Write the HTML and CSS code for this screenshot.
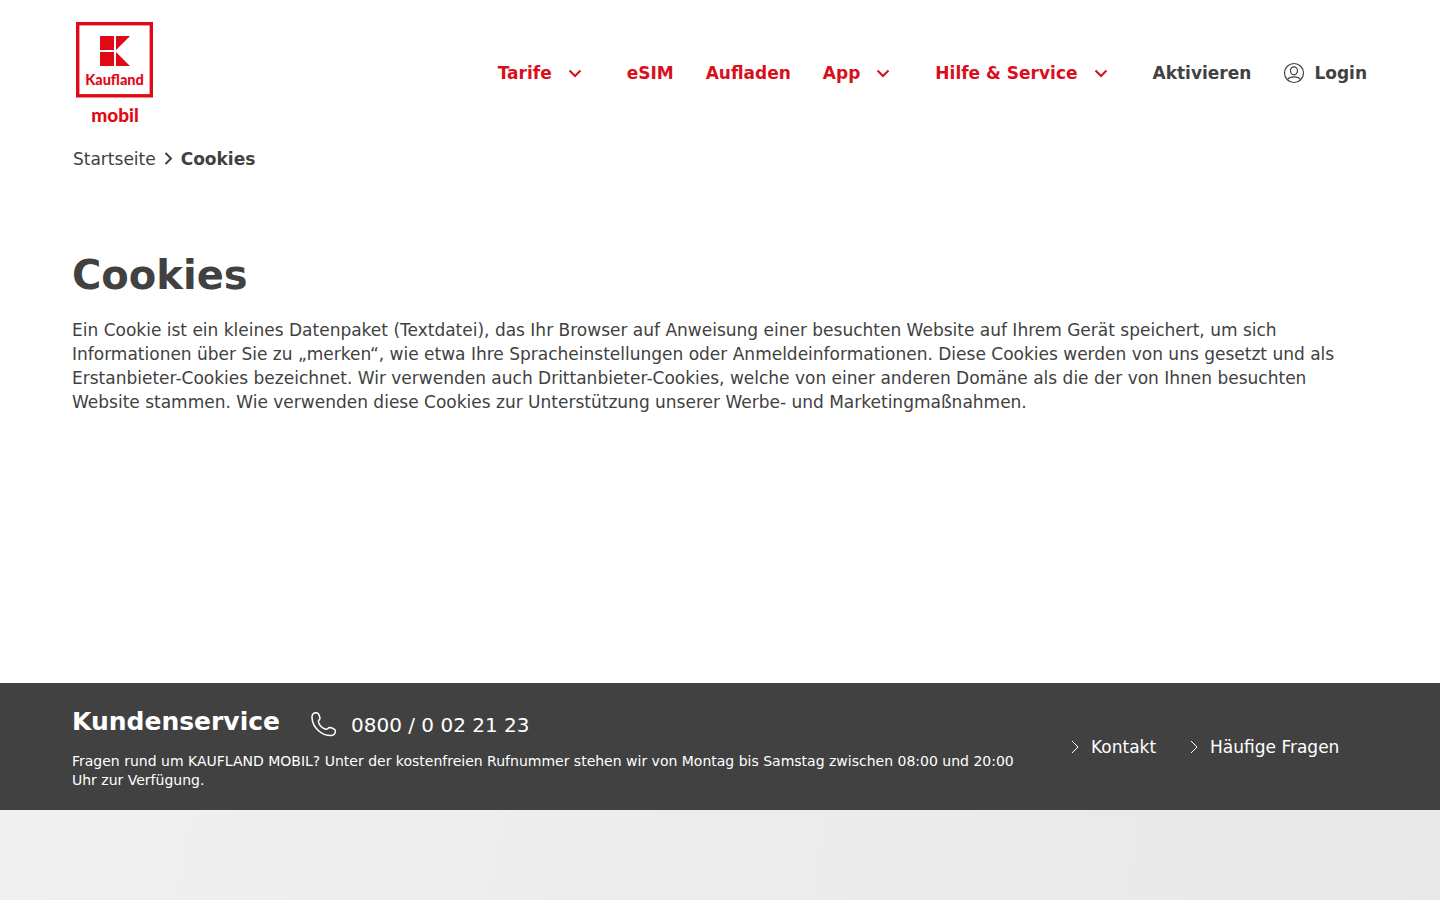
FILE: index.html
```
<!DOCTYPE html>
<html lang="de">
<head>
<meta charset="utf-8">
<meta name="viewport" content="width=device-width, initial-scale=1">
<title>Cookies | Kaufland mobil</title>
<link rel="stylesheet" href="styles.css">
</head>

<body>
<header class="header">
	<a class="logo" href="#" aria-label="Kaufland mobil">
		<svg width="84" height="108" viewBox="0 0 84 108">
			<rect x="5.700" y="4.700" width="73.600" height="72.100" fill="#fff" stroke="#e10915" stroke-width="3.400"/>
			<path fill="#e10915" d="M28 17h14v14H28zM28 33h14v14H28zM44 17h14L44 31zM44 33l14 14H44z"/>
			<text class="logotext" x="42.500" y="66" font-size="14.500" text-anchor="middle">Kaufland</text>
			<text class="logotext" x="43" y="103" font-size="19" text-anchor="middle">mobil</text>
		</svg>
	</a>
	<nav class="nav">
		<button class="navitem dropdown" type="button">Tarife
			<svg width="24" height="24" viewBox="0 0 24 24"><path d="M6.500 9.500l5.500 5.500 5.500-5.500"/></svg>
		</button>
		<a class="navitem" href="#">eSIM</a>
		<a class="navitem" href="#">Aufladen</a>
		<button class="navitem dropdown" type="button">App
			<svg width="24" height="24" viewBox="0 0 24 24"><path d="M6.500 9.500l5.500 5.500 5.500-5.500"/></svg>
		</button>
		<button class="navitem dropdown" type="button">Hilfe &amp; Service
			<svg width="24" height="24" viewBox="0 0 24 24"><path d="M6.500 9.500l5.500 5.500 5.500-5.500"/></svg>
		</button>
		<a class="navitem dark" href="#">Aktivieren</a>
		<a class="navitem dark login" href="#">
			<svg width="22" height="22" viewBox="0 0 22 22">
				<circle cx="11" cy="11" r="9.500"/>
				<ellipse cx="11" cy="8.800" rx="3.500" ry="4"/>
				<path d="M4.500 17.500c1.600-2 3.800-2.600 6.500-2.600s4.900.6 6.500 2.600"/>
			</svg>
			Login
		</a>
	</nav>
</header>

<nav class="breadcrumb" aria-label="Breadcrumb">
	<a href="#">Startseite</a>
	<svg width="9" height="14" viewBox="0 0 9 14"><path d="M1.500 1L7 6.500 1.500 12"/></svg>
	<strong>Cookies</strong>
</nav>

<main class="content">
	<h1>Cookies</h1>
	<p>Ein Cookie ist ein kleines Datenpaket (Textdatei), das Ihr Browser auf Anweisung einer besuchten Website auf Ihrem Gerät speichert, um sich Informationen über Sie zu „merken“, wie etwa Ihre Spracheinstellungen oder Anmeldeinformationen. Diese Cookies werden von uns gesetzt und als Erstanbieter-Cookies bezeichnet. Wir verwenden auch Drittanbieter-Cookies, welche von einer anderen Domäne als die der von Ihnen besuchten Website stammen. Wie verwenden diese Cookies zur Unterstützung unserer Werbe- und Marketingmaßnahmen.</p>
</main>

<section class="service">
	<div>
		<div class="servicehead">
			<h2>Kundenservice</h2>
			<a class="phone" href="tel:08000022123">
				<svg width="26" height="26" viewBox="0 0 26 26"><path d="M2.300 1.600C4 .4 6.500.4 7.400 1.800c.8 1.400 1.400 2.800 1.600 4.300.2 1.600-1.900 2-1.600 3.600.8 3.500 4.300 6.600 7.600 7.600 1.600.4 2-1.800 3.600-1.700 1.700.2 3.400.8 4.900 1.700 1.300.9 1 3.200-.1 4.700-.7 1-1.700 1.500-3 1.500C10.800 23.900 1.400 15.600 1 5.600.9 3.900 1.200 2.500 2.300 1.600z"/></svg>
				0800 / 0 02 21 23
			</a>
		</div>
		<p>Fragen rund um KAUFLAND MOBIL? Unter der kostenfreien Rufnummer stehen wir von Montag bis Samstag zwischen 08:00 und 20:00 Uhr zur Verfügung.</p>
	</div>
	<div class="servicelinks">
		<a href="#"><svg width="8" height="14" viewBox="0 0 8 14"><path d="M1 1l6 6-6 6"/></svg>Kontakt</a>
		<a href="#"><svg width="8" height="14" viewBox="0 0 8 14"><path d="M1 1l6 6-6 6"/></svg>Häufige Fragen</a>
	</div>
</section>
<footer class="footer"></footer>
</body>
</html>
```
FILE: styles.css
```
*
{
	box-sizing:border-box;
}
body
{
	display:flex;
	flex-direction:column;
	min-height:100vh;
	margin:0;
	background:#fff;
	color:#414141;
	font-family:"DejaVu Sans", Verdana, sans-serif;
	font-size:17px;
	line-height:24px;
}
a
{
	color:inherit;
	text-decoration:none;
}
h1, h2, p
{
	margin:0;
}
svg
{
	display:block;
	flex:none;
	fill:none;
	stroke:currentColor;
}
.header
{
	display:flex;
	justify-content:space-between;
	align-items:center;
	padding:19px 73px 20px 72px;
}
.logotext
{
	font-family:Lato, sans-serif;
	font-weight:900;
	fill:#e10915;
	stroke:none;
}
.logo path
{
	stroke:none;
}
.nav
{
	display:flex;
	align-items:center;
	gap:32px;
}
.navitem
{
	display:flex;
	align-items:center;
	padding:0;
	border:0;
	background:none;
	color:#d9101c;
	font:inherit;
	font-weight:bold;
	white-space:nowrap;
}
.dropdown
{
	gap:11px;
	padding-right:8px;
	cursor:pointer;
}
.dropdown svg
{
	stroke-width:2;
}
.navitem.dark
{
	color:#414141;
}
.login
{
	gap:9px;
}
.login svg
{
	stroke-width:1.2;
}
.breadcrumb
{
	display:flex;
	align-items:center;
	gap:8px;
	padding:0 73px;
}
.breadcrumb svg
{
	stroke-width:2;
}
.content
{
	min-height:512px;
	padding:76px 72px 48px;
}
h1
{
	margin-bottom:15px;
	font-size:40px;
	line-height:56px;
}
.service
{
	display:grid;
	grid-template-columns:1fr 297px;
	align-items:center;
	gap:32px;
	padding:20px 72px;
	background:#414141;
	color:#fff;
}
.servicehead
{
	display:flex;
	align-items:center;
	gap:31px;
	margin-bottom:11px;
}
h2
{
	font-size:25px;
	line-height:38px;
}
.phone
{
	display:flex;
	align-items:center;
	gap:14px;
	padding-top:6px;
	font-size:20px;
}
.phone svg
{
	stroke-width:1.5;
}
.service p
{
	font-size:14px;
	line-height:19px;
}
.servicelinks
{
	display:flex;
	gap:34px;
	white-space:nowrap;
}
.servicelinks a
{
	display:flex;
	align-items:center;
	gap:12px;
}
.footer
{
	flex:1;
	min-height:90px;
	background:linear-gradient(100deg, #f0f0f0, #e8e8e8);
}
```
